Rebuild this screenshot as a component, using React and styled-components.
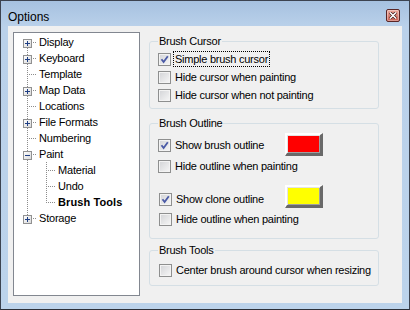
import React from "react";
import styled, { createGlobalStyle } from "styled-components";

const Global = createGlobalStyle`
  html, body { margin: 0; padding: 0; background: #fff; }
  body { font-family: "Liberation Sans", Arial, sans-serif; font-size: 11px; color: #000; }
`;

const Window = styled.div`
  width: 410px;
  height: 310px;
  box-sizing: border-box;
  border: 1px solid #3c4350;
  border-bottom-color: #2c3038;
  background: linear-gradient(#a6c1e0 0, #bad1ea 26px, #bcd3eb 100%);
  display: flex;
  flex-direction: column;
  padding: 0 7px 6px 7px;
`;

const TitleBar = styled.div`
  height: 25px;
  flex: none;
  display: flex;
  justify-content: space-between;
  align-items: flex-start;
`;

const Title = styled.span`
  font-size: 12px;
  line-height: 14px;
  padding-top: 9px;
`;

const CloseButton = styled.div`
  width: 14px;
  height: 13px;
  margin: 8px 2px 0 0;
  box-sizing: border-box;
  border: 1px solid #5a2626;
  border-radius: 2px;
  background: linear-gradient(#eeaa9e, #c95f52);
  box-shadow: inset 0 0 0 1px rgba(255, 255, 255, 0.35);
  display: flex;
  align-items: center;
  justify-content: center;
`;

const Client = styled.div`
  flex: 1;
  background: #f0f0f0;
  display: flex;
  padding: 6px 0 0 5px;
`;

const Tree = styled.div`
  width: 127px;
  height: 264px;
  flex: none;
  box-sizing: border-box;
  border: 1px solid #828790;
  background: #fff;
  padding: 1px 0 0 4px;
  letter-spacing: -0.2px;
`;

const TreeRow = styled.div`
  height: 16px;
  display: flex;
  align-items: center;
`;

const dots = (dir) =>
  `repeating-linear-gradient(${dir}, #8c8c8c 0 1px, transparent 1px 2px)`;

const Cell = styled.div`
  width: 19px;
  height: 16px;
  flex: none;
  display: flex;
  align-items: flex-start;
  background-repeat: no-repeat;
  background-image: ${(p) =>
    [
      p.$up && dots("to bottom"),
      p.$down && dots("to bottom"),
      p.$arm && dots("to right"),
    ]
      .filter(Boolean)
      .join(", ") || "none"};
  background-size: ${(p) =>
    [p.$up && "1px 8px", p.$down && "1px 8px", p.$arm && "10px 1px"]
      .filter(Boolean)
      .join(", ") || "auto"};
  background-position: ${(p) =>
    [p.$up && "9px 0", p.$down && "9px 8px", p.$arm && "9px 8px"]
      .filter(Boolean)
      .join(", ") || "0 0"};
`;

const Expander = styled.span`
  width: 9px;
  height: 9px;
  margin: 4px 0 0 5px;
  display: block;
`;

const TreeLabel = styled.span`
  margin-left: 2px;
  line-height: 14px;
  white-space: nowrap;
  font-weight: ${(p) => (p.$bold ? 700 : 400)};
  letter-spacing: ${(p) => (p.$bold ? "0.1px" : "inherit")};
`;

const Panel = styled.div`
  width: 230px;
  margin-left: 9px;
  padding-top: 2px;
  display: flex;
  flex-direction: column;
  letter-spacing: -0.25px;
`;

const Group = styled.fieldset`
  margin: ${(p) => p.$mt || 0}px 0 0;
  padding: ${(p) => p.$pt}px 8px ${(p) => p.$pb}px 8px;
  border: 1px solid #d5dfe5;
  border-radius: 3px;
  min-width: 0;
`;

const Legend = styled.legend`
  padding: 0 1px;
  line-height: 14px;
`;

const Row = styled.div`
  height: ${(p) => p.$h || 18}px;
  margin-top: ${(p) => p.$gap || 0}px;
  display: flex;
  align-items: center;
`;

const CheckItem = styled.div`
  display: flex;
  align-items: center;
  width: ${(p) => (p.$w ? `${p.$w}px` : "auto")};
  margin: ${(p) => p.$dy || 0}px 0 0 ${(p) => p.$dx || 0}px;
  flex: none;
`;

const Box = styled.span`
  width: 13px;
  height: 13px;
  box-sizing: border-box;
  flex: none;
  border: 1px solid #8e8f8f;
  background: linear-gradient(135deg, #d2d3d6, #f7f7f7);
  box-shadow: inset 0 0 0 1px #f3f3f3;
  display: flex;
  align-items: center;
  justify-content: center;
`;

const CheckLabel = styled.span`
  margin-left: 2px;
  padding: 0 1px;
  line-height: 14px;
  white-space: nowrap;
  border: 1px dotted ${(p) => (p.$focus ? "#000" : "transparent")};
`;

const Swatch = styled.div`
  width: 38px;
  height: 23px;
  box-sizing: border-box;
  flex: none;
  align-self: flex-start;
  border-style: solid;
  border-width: 2px 3px 3px 2px;
  border-color: #fff #696969 #696969 #fff;
  box-shadow: inset 1px 1px 0 #e3e3e3, inset -1px -1px 0 #a0a0a0;
  background: ${(p) => p.$color};
  background-clip: padding-box;
`;

function ExpandIcon({ open }) {
  return (
    <Expander>
      <svg width="9" height="9" viewBox="0 0 9 9">
        <defs>
          <linearGradient id="eg" x1="0" y1="0" x2="1" y2="1">
            <stop offset="0" stopColor="#ffffff" />
            <stop offset="1" stopColor="#d8d8d8" />
          </linearGradient>
        </defs>
        <rect x="0.5" y="0.5" width="8" height="8" fill="url(#eg)" stroke="#919191" />
        <path d="M2 4.5h5" stroke="#1f3f84" strokeWidth="1" />
        {!open && <path d="M4.5 2v5" stroke="#1f3f84" strokeWidth="1" />}
      </svg>
    </Expander>
  );
}

function Checkbox({ checked, label, focus }) {
  return (
    <>
      <Box>
        {checked && (
          <svg width="9" height="9" viewBox="0 0 9 9">
            <path d="M1.5 4.2 L3.6 7 L7.8 1.2" fill="none" stroke="#4a5aa6" strokeWidth="1.8" />
          </svg>
        )}
      </Box>
      <CheckLabel $focus={focus}>{label}</CheckLabel>
    </>
  );
}

const items = [
  { label: "Display", box: "plus" },
  { label: "Keyboard", box: "plus" },
  { label: "Template" },
  { label: "Map Data", box: "plus" },
  { label: "Locations" },
  { label: "File Formats", box: "plus" },
  { label: "Numbering" },
  { label: "Paint", box: "minus", children: ["Material", "Undo", "Brush Tools"] },
  { label: "Storage", box: "plus" },
];

function OptionsTree() {
  const rows = [];
  items.forEach((item, i) => {
    const last = i === items.length - 1;
    rows.push(
      <TreeRow key={item.label}>
        <Cell $up={i > 0} $down={!last} $arm>
          {item.box && <ExpandIcon open={item.box === "minus"} />}
        </Cell>
        <TreeLabel>{item.label}</TreeLabel>
      </TreeRow>
    );
    (item.children || []).forEach((child, j) => {
      const lastChild = j === item.children.length - 1;
      rows.push(
        <TreeRow key={child}>
          <Cell $up={!last} $down={!last} />
          <Cell $up $down={!lastChild} $arm />
          <TreeLabel $bold={child === "Brush Tools"}>{child}</TreeLabel>
        </TreeRow>
      );
    });
  });
  return <Tree>{rows}</Tree>;
}

export default function App() {
  return (
    <>
      <Global />
      <Window>
        <TitleBar>
          <Title>Options</Title>
          <CloseButton>
            <svg width="8" height="7" viewBox="0 0 8 7">
              <path d="M1 0.5 L7 6.5 M7 0.5 L1 6.5" stroke="#3a1414" strokeWidth="3" />
              <path d="M1 0.5 L7 6.5 M7 0.5 L1 6.5" stroke="#fff" strokeWidth="1.6" />
            </svg>
          </CloseButton>
        </TitleBar>
        <Client>
          <OptionsTree />
          <Panel>
            <Group $pt={2} $pb={4}>
              <Legend>Brush Cursor</Legend>
              <Row>
                <CheckItem><Checkbox checked focus label="Simple brush cursor" /></CheckItem>
              </Row>
              <Row>
                <CheckItem><Checkbox label="Hide cursor when painting" /></CheckItem>
              </Row>
              <Row>
                <CheckItem><Checkbox label="Hide cursor when not painting" /></CheckItem>
              </Row>
            </Group>

            <Group $mt={7} $pt={3} $pb={10}>
              <Legend>Brush Outline</Legend>
              <Row $h={24}>
                <CheckItem $w={127}><Checkbox checked label="Show brush outline" /></CheckItem>
                <Swatch $color="#ff0000" />
              </Row>
              <Row>
                <CheckItem><Checkbox label="Hide outline when painting" /></CheckItem>
              </Row>
              <Row $h={24} $gap={10}>
                <CheckItem $w={126} $dx={1} $dy={4}><Checkbox checked label="Show clone outline" /></CheckItem>
                <Swatch $color="#ffff00" />
              </Row>
              <Row $gap={1}>
                <CheckItem $dx={1}><Checkbox label="Hide outline when painting" /></CheckItem>
              </Row>
            </Group>

            <Group $mt={4} $pt={4} $pb={6}>
              <Legend>Brush Tools</Legend>
              <Row>
                <CheckItem $dx={1}><Checkbox label="Center brush around cursor when resizing" /></CheckItem>
              </Row>
            </Group>
          </Panel>
        </Client>
      </Window>
    </>
  );
}
